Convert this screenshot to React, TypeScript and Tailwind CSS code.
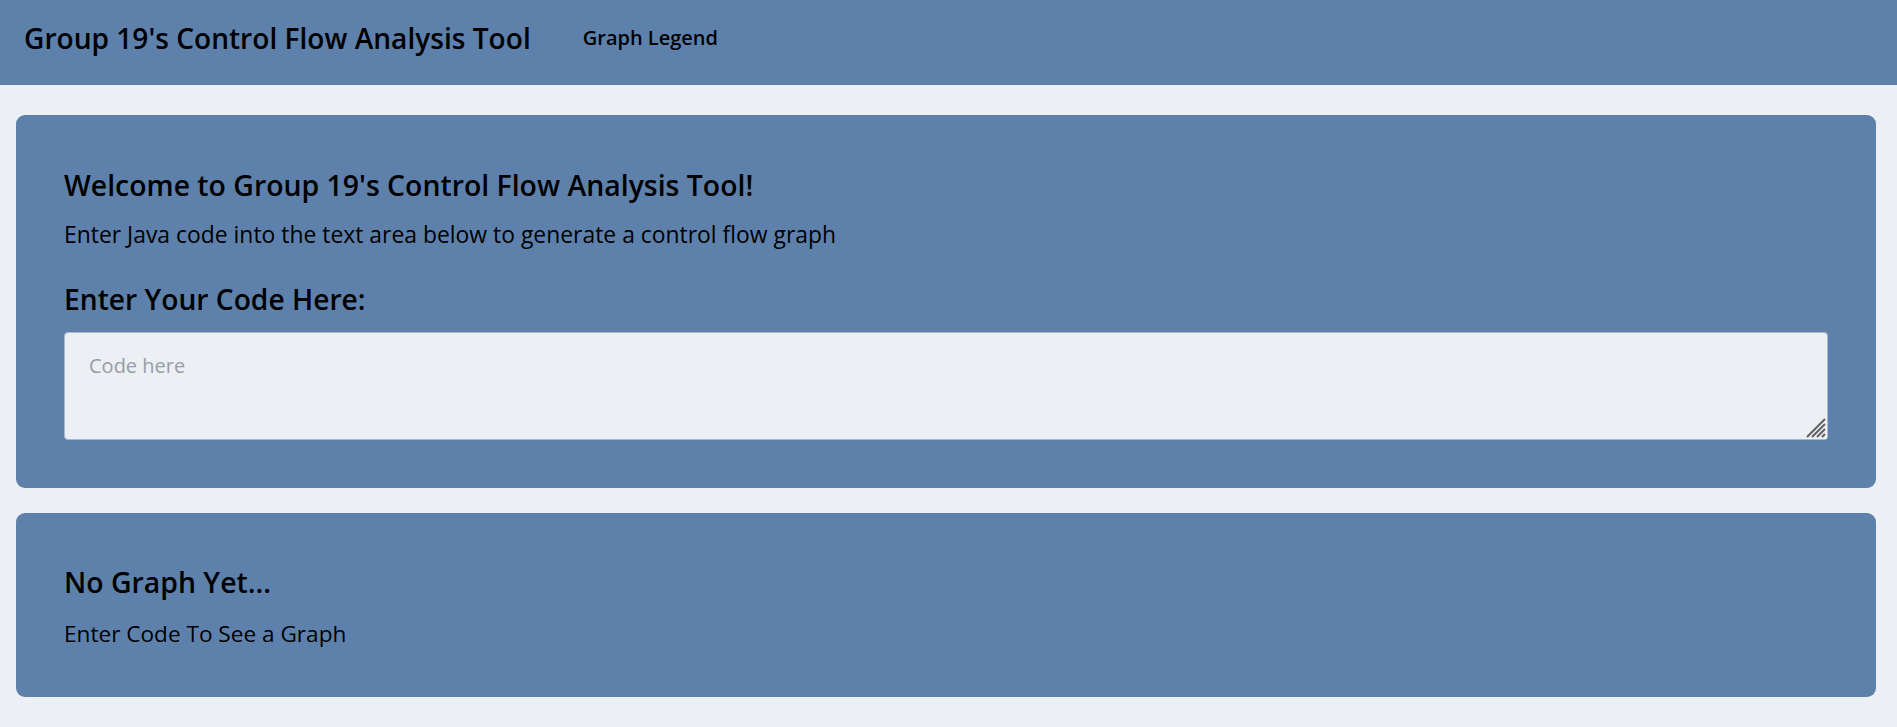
import React from "react";

function ResizeGrip() {
  return (
    <svg
      className="pointer-events-none absolute right-[1px] bottom-[1px]"
      width="24"
      height="24"
      viewBox="0 0 24 24"
    >
      <rect x="0" y="0" width="24" height="24" fill="#ECEFF4" />
      <g stroke="#5f5f5f" strokeWidth="2" strokeLinecap="butt">
        <line x1="22" y1="4" x2="4" y2="22" />
        <line x1="22" y1="9" x2="9" y2="22" />
        <line x1="22" y1="14" x2="14" y2="22" />
        <line x1="22" y1="19" x2="19" y2="22" />
      </g>
    </svg>
  );
}

export default function App() {
  return (
    <div className="min-h-screen bg-[#ECEFF4] text-black" style={{ fontFamily: '"Open Sans", "Noto Sans", sans-serif' }}>
      <header className="h-[85px] bg-[#5E81AC] flex items-center pl-6 pb-[9px] gap-[52px]">
        <h1 className="text-[28.1px] font-semibold leading-none">Group 19's Control Flow Analysis Tool</h1>
        <a className="text-[20px] font-semibold leading-none cursor-pointer">Graph Legend</a>
      </header>
      <main className="pl-4 pr-[21px] pt-[30px] pb-6 flex flex-col gap-[25px]">
        <section className="bg-[#5E81AC] rounded-[9px] px-12 pt-[53px] pb-12">
          <h2 className="text-[28.4px] font-semibold leading-[34px]">Welcome to Group 19's Control Flow Analysis Tool!</h2>
          <p className="text-[22.9px] leading-[30px] mt-[18px]">Enter Java code into the text area below to generate a control flow graph</p>
          <h3 className="text-[28.2px] font-semibold leading-[34px] mt-[32px]">Enter Your Code Here:</h3>
          <div className="relative mt-[16px]">
            <textarea
              placeholder="Code here"
              className="block w-full h-[108px] bg-[#ECEFF4] border border-[#a8bad0] rounded-[4px] px-6 pt-[18px] pb-4 text-[20px] leading-[30px] placeholder:text-[#9a9da4] outline-none resize-none"
            />
            <ResizeGrip />
          </div>
        </section>
        <section className="bg-[#5E81AC] rounded-[9px] px-12 pt-[52px] pb-[48px]">
          <h2 className="text-[28.4px] font-semibold leading-[34px]">No Graph Yet...</h2>
          <p className="text-[22.6px] leading-[30px] mt-[20px]">Enter Code To See a Graph</p>
        </section>
      </main>
    </div>
  );
}
